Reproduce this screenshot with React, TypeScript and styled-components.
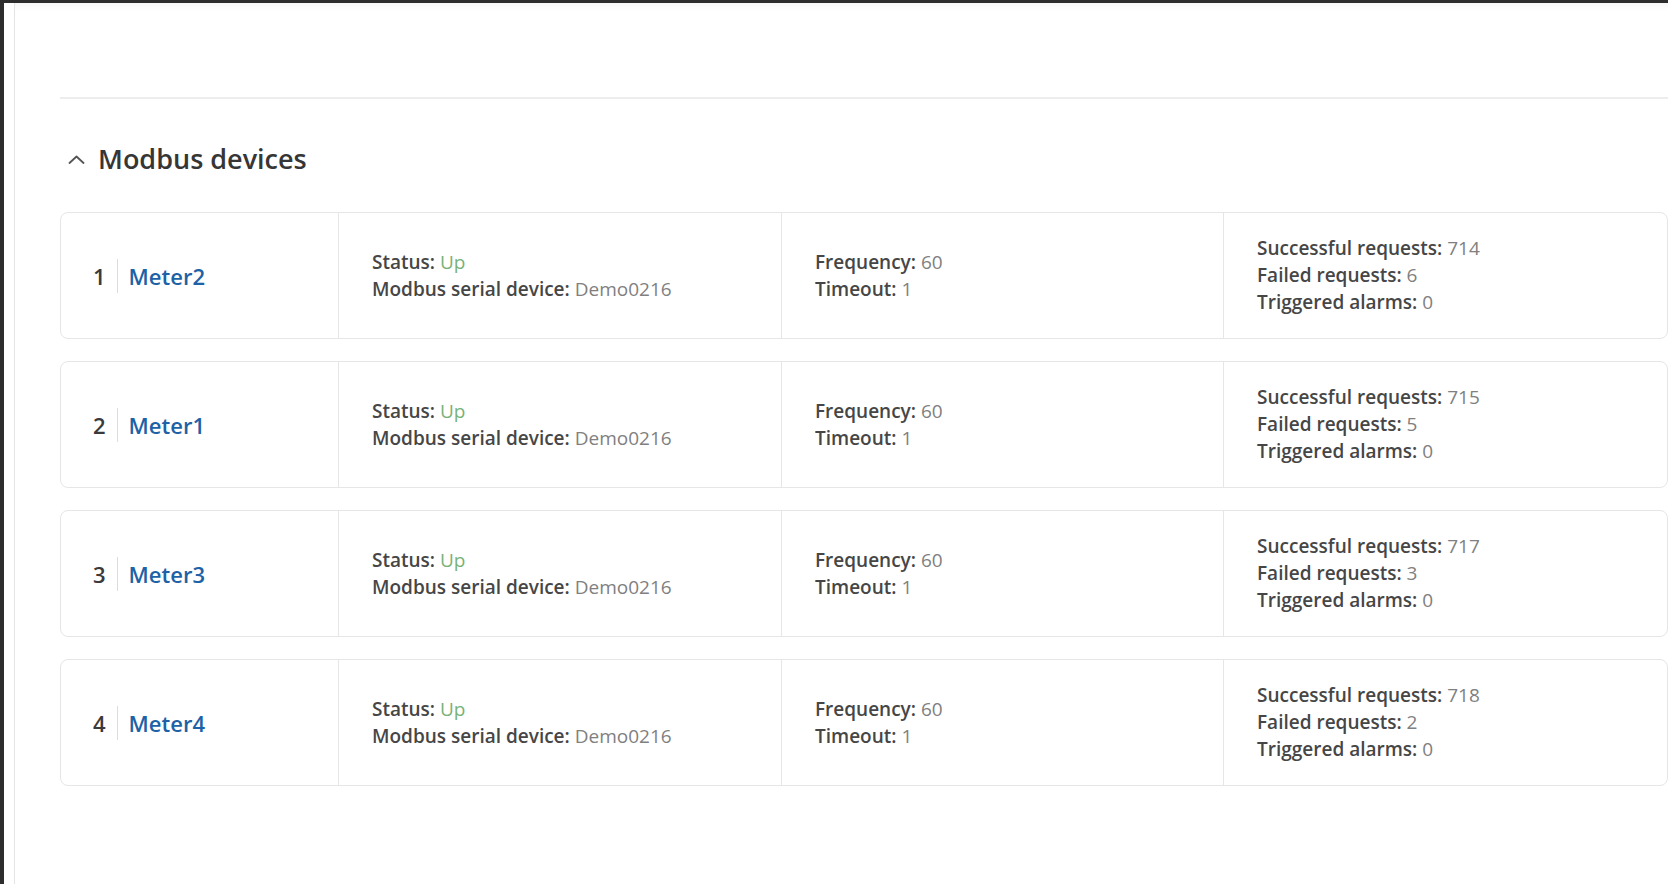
import { createGlobalStyle, styled } from "styled-components";

const GlobalStyle = createGlobalStyle`
  html, body {
    margin: 0;
    padding: 0;
    background: #ffffff;
    overflow: hidden;
  }

  body {
    font-family: "Open Sans", "Noto Sans", "Liberation Sans", sans-serif;
    color: #404040;
  }
`;

const Frame = styled.div`
  height: 884px;
  box-sizing: border-box;
  border-top: 3px solid #2d2d2d;
  border-left: 4px solid #2d2d2d;
  padding-left: 10px;
  display: flex;
`;

const Panel = styled.div`
  flex: 1;
  border-left: 1px solid #e4e4e4;
  padding: 94px 0 0 45px;
  background: linear-gradient(#f7f7f7 0, #ffffff 8px);
`;

const Section = styled.section`
  border-top: 2px solid #ededed;
  padding-top: 43px;
`;

const SectionHeader = styled.div`
  display: flex;
  align-items: center;
  gap: 13px;
  padding-left: 8px;
  height: 34px;
  margin-bottom: 36px;
`;

const Title = styled.h2`
  margin: 0;
  font-size: 27px;
  line-height: 34px;
  font-weight: 600;
  color: #363636;
`;

const List = styled.div`
  display: flex;
  flex-direction: column;
  gap: 22px;
`;

const Card = styled.div`
  display: grid;
  grid-template-columns: 277px 443px 442px 1fr;
  height: 127px;
  box-sizing: border-box;
  border: 1px solid #e6e6e6;
  border-radius: 8px;
  background: #ffffff;
`;

const Cell = styled.div<{ $first?: boolean }>`
  display: flex;
  flex-direction: column;
  justify-content: center;
  padding-left: ${(p) => (p.$first ? "32px" : "33px")};
  border-left: ${(p) => (p.$first ? "none" : "1px solid #e6e6e6")};
`;

const NameRow = styled.div`
  display: flex;
  align-items: center;
  font-size: 22px;
  font-weight: 600;
`;

const Index = styled.span`
  color: #3a3a3a;
  padding-right: 11px;
`;

const Sep = styled.span`
  width: 1px;
  height: 34px;
  background: #dcdcdc;
  margin-right: 11px;
`;

const DeviceLink = styled.a`
  color: #1d62a6;
  text-decoration: none;
  line-height: 32px;
`;

const Line = styled.div`
  font-size: 19px;
  line-height: 27px;
  white-space: nowrap;
`;

const Label = styled.span`
  font-weight: 600;
  color: #464646;
`;

const Value = styled.span<{ $ok?: boolean }>`
  color: ${(p) => (p.$ok ? "#78b278" : "#808080")};
`;

const Chevron = () => (
  <svg width="17" height="9" viewBox="0 0 17 9" fill="none">
    <path d="M1.5 8L8.5 1.5L15.5 8" stroke="#555555" strokeWidth="1.8" strokeLinecap="round" strokeLinejoin="round" />
  </svg>
);

const devices = [
  { name: "Meter2", ok: 714, failed: 6 },
  { name: "Meter1", ok: 715, failed: 5 },
  { name: "Meter3", ok: 717, failed: 3 },
  { name: "Meter4", ok: 718, failed: 2 },
];

function App() {
  return (
    <>
      <GlobalStyle />
      <Frame>
        <Panel>
          <Section>
            <SectionHeader>
              <Chevron />
              <Title>Modbus devices</Title>
            </SectionHeader>

            <List>
              {devices.map((d, i) => (
                <Card key={d.name}>
                  <Cell $first>
                    <NameRow>
                      <Index>{i + 1}</Index>
                      <Sep />
                      <DeviceLink href="#">{d.name}</DeviceLink>
                    </NameRow>
                  </Cell>
                  <Cell>
                    <Line>
                      <Label>Status:</Label> <Value $ok>Up</Value>
                    </Line>
                    <Line>
                      <Label>Modbus serial device:</Label> <Value>Demo0216</Value>
                    </Line>
                  </Cell>
                  <Cell>
                    <Line>
                      <Label>Frequency:</Label> <Value>60</Value>
                    </Line>
                    <Line>
                      <Label>Timeout:</Label> <Value>1</Value>
                    </Line>
                  </Cell>
                  <Cell>
                    <Line>
                      <Label>Successful requests:</Label> <Value>{d.ok}</Value>
                    </Line>
                    <Line>
                      <Label>Failed requests:</Label> <Value>{d.failed}</Value>
                    </Line>
                    <Line>
                      <Label>Triggered alarms:</Label> <Value>0</Value>
                    </Line>
                  </Cell>
                </Card>
              ))}
            </List>
          </Section>
        </Panel>
      </Frame>
    </>
  );
}

export default App;
